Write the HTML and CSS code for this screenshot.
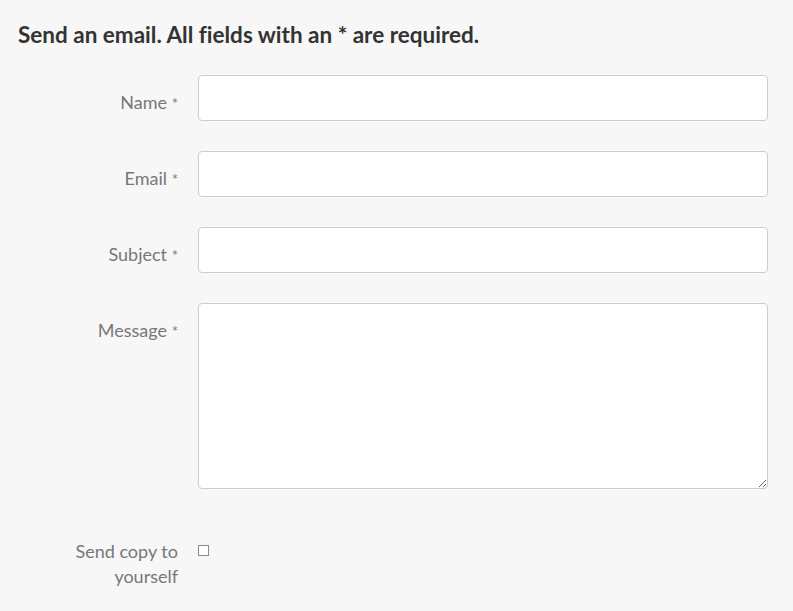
FILE: index.html
```html
<!DOCTYPE html>
<html lang="en">
<head>
<meta charset="utf-8">
<title>Send an email</title>
<link rel="stylesheet" href="styles.css">
</head>
<body>
<div class="page">
  <h2 class="title">Send an email. All fields with an * are required.</h2>
  <form class="form">
    <label class="label" for="name">Name <span class="req">*</span></label>
    <input class="field" id="name" type="text">
    <label class="label" for="email">Email <span class="req">*</span></label>
    <input class="field" id="email" type="email">
    <label class="label" for="subject">Subject <span class="req">*</span></label>
    <input class="field" id="subject" type="text">
    <label class="label" for="message">Message <span class="req">*</span></label>
    <textarea class="field area" id="message"></textarea>
    <label class="label copy" for="copy">Send copy to yourself</label>
    <div class="check-cell copy"><input class="check" id="copy" type="checkbox"></div>
  </form>
</div>
</body>
</html>
```
FILE: styles.css
```css
html, body {
  margin: 0;
  padding: 0;
  background: #f7f7f7;
}
body {
  font-family: Lato, "Open Sans", sans-serif;
  color: #333;
  font-variant-ligatures: none;
}
.page {
  width: 750px;
  padding: 0 0 0 18px;
}
.title {
  margin: 0;
  padding-top: 21px;
  font-size: 22.5px;
  font-weight: 700;
  line-height: 28px;
  color: #333;
}
.form {
  display: grid;
  grid-template-columns: 160px 1fr;
  column-gap: 20px;
  row-gap: 30px;
  margin-top: 26px;
}
.label {
  text-align: right;
  font-size: 18px;
  line-height: 25px;
  color: #777;
  padding-top: 15px;
}
.req {
  font-size: 15px;
}
.field {
  box-sizing: border-box;
  height: 46px;
  width: 100%;
  margin: 0;
  border: 1px solid #ccc;
  border-radius: 4px;
  background: #fff;
  font-family: inherit;
  font-size: 16px;
}
.area {
  height: 186px;
}
.copy {
  margin-top: 5px;
}
.check-cell {
  padding-top: 21px;
}
.check {
  appearance: none;
  -webkit-appearance: none;
  display: block;
  width: 11px;
  height: 11px;
  margin: 0;
  border: 1px solid #8a8a8a;
  background: #fff;
  border-radius: 0;
}
```
